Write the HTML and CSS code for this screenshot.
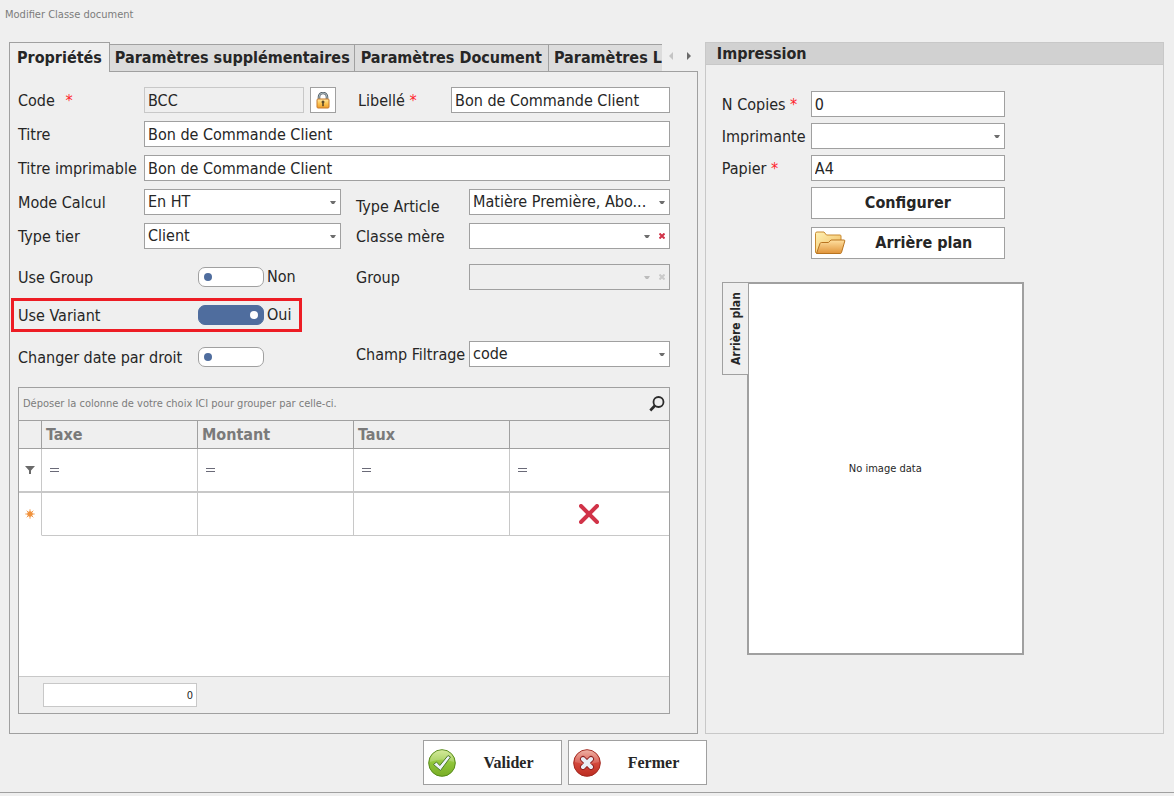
FILE: index.html
```html
<!DOCTYPE html>
<html lang="fr">
<head>
<meta charset="utf-8">
<title>Modifier Classe document</title>
<link rel="stylesheet" href="styles.css">
</head>
<body>
<h1 class="window-title">Modifier Classe document</h1>
<main class="workspace">
  <section class="tabs">
    <div class="tab-bar">
      <div class="tab-strip" role="tablist">
        <button class="tab tab-active" role="tab" aria-selected="true">Propriétés</button>
        <button class="tab" role="tab">Paramètres supplémentaires</button>
        <button class="tab tab-wide" role="tab">Paramètres Document</button>
        <button class="tab tab-last" role="tab">Paramètres L</button>
      </div>
      <div class="tab-nav">
        <button class="nav-button" aria-label="Précédent" disabled><svg width="4" height="8" viewBox="0 0 4 8"><path d="M4 0v8L0 4z" fill="#c4c4c4"/></svg></button>
        <button class="nav-button" aria-label="Suivant"><svg width="4" height="8" viewBox="0 0 4 8"><path d="M0 0v8l4-4z" fill="#6a6a6a"/></svg></button>
      </div>
    </div>
    <div class="tab-panel" role="tabpanel">
      <div class="stack">
        <div class="row">
          <label class="label" for="code">Code <span class="required required-spaced">*</span></label>
          <input class="field code-field" id="code" value="BCC" disabled>
          <button class="lock-button" aria-label="Verrouiller">
            <svg width="14" height="17" viewBox="0 0 14 17">
              <defs><linearGradient id="lockBody" x1="0" y1="0" x2="0" y2="1"><stop offset="0" stop-color="#ffe9a8"/><stop offset="0.5" stop-color="#fcc552"/><stop offset="1" stop-color="#ee9d2c"/></linearGradient></defs>
              <path d="M3 8V5a4 4 0 0 1 8 0v3" fill="none" stroke="#59646c" stroke-width="2.6"/>
              <path d="M3 8V5a4 4 0 0 1 8 0v3" fill="none" stroke="#a9b7bd" stroke-width="1"/>
              <rect x="1" y="7" width="12" height="9" rx="1" fill="url(#lockBody)" stroke="#c77a2c"/>
              <path d="M6 9h2v2h-.5v3h-1v-3H6z" fill="#5a4a2c" stroke="#5a4a2c" stroke-width=".6"/>
            </svg>
          </button>
          <label class="label libelle-label" for="libelle">Libellé <span class="required">*</span></label>
          <input class="field" id="libelle" value="Bon de Commande Client">
        </div>
        <div class="row">
          <label class="label" for="titre">Titre</label>
          <input class="field" id="titre" value="Bon de Commande Client">
        </div>
        <div class="row">
          <label class="label" for="titre-imp">Titre imprimable</label>
          <input class="field" id="titre-imp" value="Bon de Commande Client">
        </div>
      </div>
      <div class="columns">
        <div class="column-left">
          <div class="row">
            <label class="label" for="mode">Mode Calcul</label>
            <div class="combo"><select class="field" id="mode"><option>En HT</option></select><svg class="caret" viewBox="0 0 6 4"><path d="M0 0h6L4 3H2z"/></svg></div>
          </div>
          <div class="row">
            <label class="label" for="tier">Type tier</label>
            <div class="combo"><select class="field" id="tier"><option>Client</option></select><svg class="caret" viewBox="0 0 6 4"><path d="M0 0h6L4 3H2z"/></svg></div>
          </div>
          <div class="row switch-row row-apart">
            <label class="label" for="use-group">Use Group</label>
            <input class="switch" type="checkbox" id="use-group"><span class="state">Non</span>
          </div>
          <div class="row switch-row highlight">
            <label class="label" for="use-variant">Use Variant</label>
            <input class="switch" type="checkbox" id="use-variant" checked><span class="state">Oui</span>
          </div>
          <div class="row switch-row row-date">
            <label class="label" for="date-droit">Changer date par droit</label>
            <input class="switch" type="checkbox" id="date-droit">
          </div>
        </div>
        <div class="column-right">
          <div class="row">
            <label class="label label-low" for="article">Type Article</label>
            <div class="combo"><select class="field" id="article"><option>Matière Première, Abo...</option></select><svg class="caret" viewBox="0 0 6 4"><path d="M0 0h6L4 3H2z"/></svg></div>
          </div>
          <div class="row row-mere">
            <label class="label" for="mere">Classe mère</label>
            <div class="combo clearable"><select class="field" id="mere"><option></option></select><svg class="caret" viewBox="0 0 6 4"><path d="M0 0h6L4 3H2z"/></svg><button class="clear" aria-label="Effacer"><svg width="6" height="6" viewBox="0 0 6 6"><path d="M.5.5l5 5m0-5l-5 5"/></svg></button></div>
          </div>
          <div class="row row-group">
            <label class="label" for="group">Group</label>
            <div class="combo clearable combo-disabled"><select class="field" id="group" disabled><option></option></select><svg class="caret" viewBox="0 0 6 4"><path d="M0 0h6L4 3H2z"/></svg><button class="clear" aria-label="Effacer" disabled><svg width="6" height="6" viewBox="0 0 6 6"><path d="M.5.5l5 5m0-5l-5 5"/></svg></button></div>
          </div>
          <div class="row row-filter">
            <label class="label" for="filtrage">Champ Filtrage</label>
            <div class="combo"><select class="field" id="filtrage"><option>code</option></select><svg class="caret" viewBox="0 0 6 4"><path d="M0 0h6L4 3H2z"/></svg></div>
          </div>
        </div>
      </div>
      <div class="grid">
        <div class="group-bar">
          <span>Déposer la colonne de votre choix ICI pour grouper par celle-ci.</span>
          <button class="search" aria-label="Rechercher"><svg width="16" height="16" viewBox="0 0 16 16" fill="none" stroke="#2b2b2b"><circle cx="9.5" cy="6" r="5" stroke-width="1.8"/><path d="M6 9.500L1.300 14.500" stroke-width="2.600"/></svg></button>
        </div>
        <table class="tax-table">
          <colgroup><col class="col-mark"><col class="col-data"><col class="col-data"><col class="col-data"><col></colgroup>
          <thead><tr><th></th><th>Taxe</th><th>Montant</th><th>Taux</th><th></th></tr></thead>
          <tbody>
            <tr class="filter-row">
              <td class="mark"><svg width="10" height="9" viewBox="0 0 10 9"><path d="M0 0h10L6 4.500V8H4V4.500z" fill="#6a6a6a"/></svg></td>
              <td><svg class="equals" viewBox="0 0 9 4"><path d="M0 .5h9M0 3.500h9"/></svg></td>
              <td><svg class="equals" viewBox="0 0 9 4"><path d="M0 .5h9M0 3.500h9"/></svg></td>
              <td><svg class="equals" viewBox="0 0 9 4"><path d="M0 .5h9M0 3.500h9"/></svg></td>
              <td><svg class="equals" viewBox="0 0 9 4"><path d="M0 .5h9M0 3.500h9"/></svg></td>
            </tr>
            <tr class="new-row">
              <td class="mark"><svg width="10" height="10" viewBox="0 0 10 10"><circle cx="5" cy="5" r="2.700" fill="#f0923c"/><path d="M5 .3v9.400M.3 5h9.400M1.700 1.700l6.600 6.600M8.300 1.700L1.700 8.300" stroke="#f0923c" stroke-width=".9"/></svg></td>
              <td></td><td></td><td></td>
              <td class="remove-cell"><button class="remove" aria-label="Supprimer"><svg width="20" height="20" viewBox="0 0 20 20"><path d="M2 2l16 16m0-16l-16 16" stroke="#d13348" stroke-width="4" stroke-linecap="round"/></svg></button></td>
            </tr>
          </tbody>
        </table>
        <div class="grid-space"></div>
        <div class="summary"><input class="total" aria-label="Total" value="0" readonly></div>
      </div>
    </div>
  </section>

  <section class="print">
    <h2 class="print-title">Impression</h2>
    <div class="print-body">
      <div class="print-form">
        <div class="row"><label class="label" for="copies">N Copies <span class="required">*</span></label><input class="field" id="copies" value="0"></div>
        <div class="row"><label class="label" for="printer">Imprimante</label><div class="combo"><select class="field" id="printer"><option></option></select><svg class="caret" viewBox="0 0 6 4"><path d="M0 0h6L4 3H2z"/></svg></div></div>
        <div class="row"><label class="label" for="papier">Papier <span class="required">*</span></label><input class="field" id="papier" value="A4"></div>
        <div class="print-actions">
          <button class="action">Configurer</button>
          <button class="action action-icon">
            <svg width="32" height="24" viewBox="0 0 32 24">
              <defs>
                <linearGradient id="folderBack" x1="0" y1="0" x2="1" y2="1"><stop offset="0" stop-color="#fff2b4"/><stop offset="1" stop-color="#f0b85c"/></linearGradient>
                <linearGradient id="folderFront" x1="0" y1="0" x2="0" y2="1"><stop offset="0" stop-color="#ffe0a0"/><stop offset="1" stop-color="#e0943a"/></linearGradient>
              </defs>
              <path d="M1.500 21.500V2.500Q1.500 1 3 1h7l2.500 3H26q1 0 1 1v5L24 22H2.500z" fill="url(#folderBack)" stroke="#c98a30"/>
              <path d="M2.500 22.500L6 12.500q.4-1 1.400-1h7L17 9h13q1 0 .8 1L27.500 21.500q-.3 1-1.200 1z" fill="url(#folderFront)" stroke="#b87420"/>
            </svg>
            <span>Arrière plan</span>
          </button>
        </div>
      </div>
      <div class="preview">
        <button class="preview-tab">Arrière plan</button>
        <div class="preview-image">No image data</div>
      </div>
    </div>
  </section>
</main>
<footer class="footer">
  <button class="footer-button">
    <svg width="28" height="28" viewBox="0 0 28 28">
      <defs><linearGradient id="okFill" x1="0" y1="0" x2="0" y2="1"><stop offset="0" stop-color="#cbe582"/><stop offset="0.5" stop-color="#8fc53a"/><stop offset="1" stop-color="#79ad26"/></linearGradient></defs>
      <circle cx="14" cy="14" r="13.300" fill="url(#okFill)" stroke="#588c1c"/>
      <path d="M2 13a12 12 0 0 1 24 0q-12-5-24 0z" fill="#fff" opacity=".2"/>
      <path d="M5.500 15.500l3-2.500 3.300 3.500L20 6.500l2.500 1.500L12.500 21.500z" fill="#eff4fa" stroke="#4d7a28" stroke-linejoin="round"/>
    </svg>
    <span>Valider</span>
  </button>
  <button class="footer-button">
    <svg width="28" height="28" viewBox="0 0 28 28">
      <defs><linearGradient id="closeFill" x1="0" y1="0" x2="0" y2="1"><stop offset="0" stop-color="#eda596"/><stop offset="0.500" stop-color="#d4483c"/><stop offset="1" stop-color="#bc2c20"/></linearGradient></defs>
      <circle cx="14" cy="14" r="13.300" fill="url(#closeFill)" stroke="#a32a22"/>
      <path d="M2 13a12 12 0 0 1 24 0q-12 4-24 0z" fill="#fff" opacity=".15"/>
      <path d="M10 10l8 8m0-8l-8 8" stroke="#8c2020" stroke-width="6" stroke-linecap="round"/>
      <path d="M10 10l8 8m0-8l-8 8" stroke="#e9eef6" stroke-width="4" stroke-linecap="round"/>
    </svg>
    <span>Fermer</span>
  </button>
</footer>
</body>
</html>
```
FILE: styles.css
```css
* { box-sizing: border-box; }

body {
  display: flex;
  flex-direction: column;
  min-height: 100vh;
  margin: 0;
  padding-bottom: 3px;
  background: #efefef;
  color: #262626;
  font-family: "DejaVu Sans Condensed", "DejaVu Sans", "Noto Sans", sans-serif;
  font-stretch: condensed;
  font-size: 16px;
  line-height: 20px;
}

button, input, select { font: inherit; color: inherit; margin: 0; border-radius: 0; }
button { padding: 0; border: 0; background: none; }
svg { display: block; flex: none; }

.window-title {
  margin: 0;
  padding: 7px 5px 19px;
  color: #7c7c7c;
  font-size: 11px;
  font-weight: 400;
  line-height: 16px;
}

.workspace {
  display: grid;
  grid-template-columns: 3fr 2fr;
  gap: 7px;
  flex: 1;
  padding: 0 10px 0 9px;
}

.tabs { display: flex; flex-direction: column; min-width: 0; }
.tab-bar { position: relative; z-index: 1; display: flex; height: 30px; margin-bottom: -1px; }
.tab-strip { display: flex; flex: 1; align-items: flex-end; min-width: 0; overflow: hidden; }
.tab {
  flex: none;
  height: 28px;
  padding: 0 4px 0 5px;
  border: 1px solid #a0a0a0;
  border-left-width: 0;
  background: #dcdcdc;
  font-weight: 700;
  white-space: nowrap;
}
.tab-active { height: 30px; padding: 0 7px; border-left-width: 1px; border-bottom: 0; background: #efefef; }
.tab-wide { padding: 0 6px; }
.tab-last { flex: 1; padding: 0 0 0 5px; border-right: 0; text-align: left; }
.tab-nav { display: flex; gap: 14px; align-items: center; width: 36px; padding: 0 7px 2px; }
.nav-button { flex: none; width: 4px; }

.tab-panel {
  display: flex;
  flex: 1;
  flex-direction: column;
  padding: 15px 27px 19px 8px;
  border: 1px solid #a0a0a0;
}

.stack { display: flex; flex-direction: column; gap: 8px; margin-bottom: 6px; }
.row { display: flex; align-items: center; }
.label { flex: none; width: 126px; padding-top: 2px; white-space: nowrap; }
.required { color: #ff1e2d; }
.required-spaced { margin-left: 6px; }

.field {
  flex: 1;
  width: 100%;
  min-width: 0;
  height: 26px;
  padding: 0 3px;
  border: 1px solid #a0a0a0;
  outline: 0;
  background: #fff;
  appearance: none;
}
.field:disabled { background: #efefef; color: #262626; opacity: 1; }
.code-field { flex: 0 0 160px; }
.code-field:disabled { border-color: #c8c8c8; }
.lock-button {
  display: flex;
  flex: none;
  align-items: center;
  justify-content: center;
  width: 26px;
  height: 26px;
  margin: 0 22px 0 6px;
  border: 1px solid #a0a0a0;
  background: #fff;
}
.libelle-label { width: 93px; }

.columns { display: flex; gap: 15px; margin-bottom: 17px; }
.column-left { display: flex; flex: none; flex-direction: column; gap: 8px; width: 323px; padding-top: 2px; }
.column-right { flex: 1; min-width: 0; }
.column-right .label { width: 113px; }
.column-right .label-low { padding-top: 10px; }
.row-mere { margin-top: 6px; }
.row-group { margin-top: 15px; }
.row-filter { margin-top: 51px; }

.combo { position: relative; display: flex; flex: 1; min-width: 0; }
.caret { position: absolute; top: 12px; right: 5px; width: 6px; height: 4px; fill: #6e6e6e; }
.clearable .caret { right: 20px; }
.clear { position: absolute; top: 10px; right: 5px; stroke: #d13348; stroke-width: 2; }
.combo-disabled .caret { fill: #bcbcbc; }
.combo-disabled .clear { stroke: #cacaca; }

.switch-row { min-height: 26px; }
.switch-row .label { width: 180px; }
.row-apart { margin-top: 7px; }
.row-date { margin-top: 4px; }
.switch {
  display: flex;
  flex: none;
  align-items: center;
  width: 66px;
  height: 20px;
  padding: 0 5px;
  border: 1px solid #a0a0a0;
  border-radius: 7px;
  background: #fff;
  appearance: none;
}
.switch::before { content: ""; width: 8px; height: 8px; border-radius: 50%; background: #4f6d9e; }
.switch:checked { justify-content: flex-end; border-color: #4f6d9e; background: #4f6d9e; }
.switch:checked::before { background: #fff; }
.state { margin-left: 3px; }
.highlight { width: 291px; height: 34px; margin-left: -7px; padding-left: 4px; border: 3px solid #ed1c24; }

.grid { display: flex; flex: 1; flex-direction: column; min-height: 326px; border: 1px solid #a0a0a0; background: #fff; }
.group-bar {
  display: flex;
  align-items: center;
  justify-content: space-between;
  height: 33px;
  padding: 0 4px;
  border-bottom: 1px solid #a0a0a0;
  background: #efefef;
  color: #7c7c7c;
  font-size: 11px;
}
.tax-table { width: 100%; table-layout: fixed; border-collapse: separate; border-spacing: 0; }
.col-mark { width: 23px; }
.col-data { width: 156px; }
.tax-table th {
  height: 28px;
  padding: 0 4px;
  border-right: 1px solid #a0a0a0;
  border-bottom: 1px solid #a0a0a0;
  background: #efefef;
  color: #7a7a7a;
  text-align: left;
}
.tax-table td { height: 44px; padding: 0 8px; border-right: 1px solid #c8c8c8; border-bottom: 2px solid #c8c8c8; }
.tax-table .mark { padding: 0 6px; }
.new-row td { height: 43px; border-bottom-width: 1px; }
.new-row .mark { border-bottom-color: transparent; }
.tax-table th:last-child, .tax-table td:last-child { border-right: 0; }
.equals { width: 9px; height: 4px; stroke: #6a6a78; stroke-width: 1; }
.remove { display: block; margin: 0 auto; }
.grid-space { flex: 1; }
.summary { height: 37px; padding: 6px 24px; border-top: 1px solid #c8c8c8; background: #efefef; }
.total {
  display: block;
  width: 154px;
  height: 24px;
  padding: 0 3px;
  border: 1px solid #c8c8c8;
  background: #fff;
  font-size: 11px;
  text-align: right;
}

.print { min-width: 0; border: 1px solid #c8c8c8; }
.print-title { margin: 0; padding: 1px 11px 0; border-bottom: 1px solid #c8c8c8; background: #d1d1d1; font-size: 16px; line-height: 20px; }
.print-body { padding: 26px 16px; }
.print-form { display: flex; flex-direction: column; gap: 6px; width: 283px; max-width: 100%; }
.print-form .label { width: 89px; }
.print-actions { display: flex; flex-direction: column; gap: 8px; margin-left: 89px; }
.action { height: 32px; border: 1px solid #a0a0a0; background: #fff; font-weight: 700; }
.action-icon { display: flex; align-items: center; padding: 0 2px; }
.action-icon span { flex: 1; }

.preview { display: flex; align-items: flex-start; margin-top: 23px; }
.preview-tab {
  position: relative;
  z-index: 1;
  width: 27px;
  height: 93px;
  margin-right: -2px;
  border: 1px solid #a0a0a0;
  background: #efefef;
  font-size: 12px;
  font-weight: 700;
  writing-mode: vertical-rl;
  transform: rotate(180deg);
}
.preview-image {
  display: flex;
  align-items: center;
  justify-content: center;
  width: 277px;
  height: 373px;
  border: 2px solid #a0a0a0;
  background: #fff;
  font-size: 11px;
}

.footer { display: flex; justify-content: center; gap: 6px; padding: 6px 44px 7px 0; border-bottom: 1px solid #a0a0a0; }
.footer-button {
  display: flex;
  align-items: center;
  width: 139px;
  height: 45px;
  padding: 0 4px;
  border: 1px solid #a0a0a0;
  background: #fff;
  font-family: "Liberation Serif", serif;
  font-size: 16px;
  font-weight: 700;
}
.footer-button span { flex: 1; padding-left: 4px; text-align: center; }
```
